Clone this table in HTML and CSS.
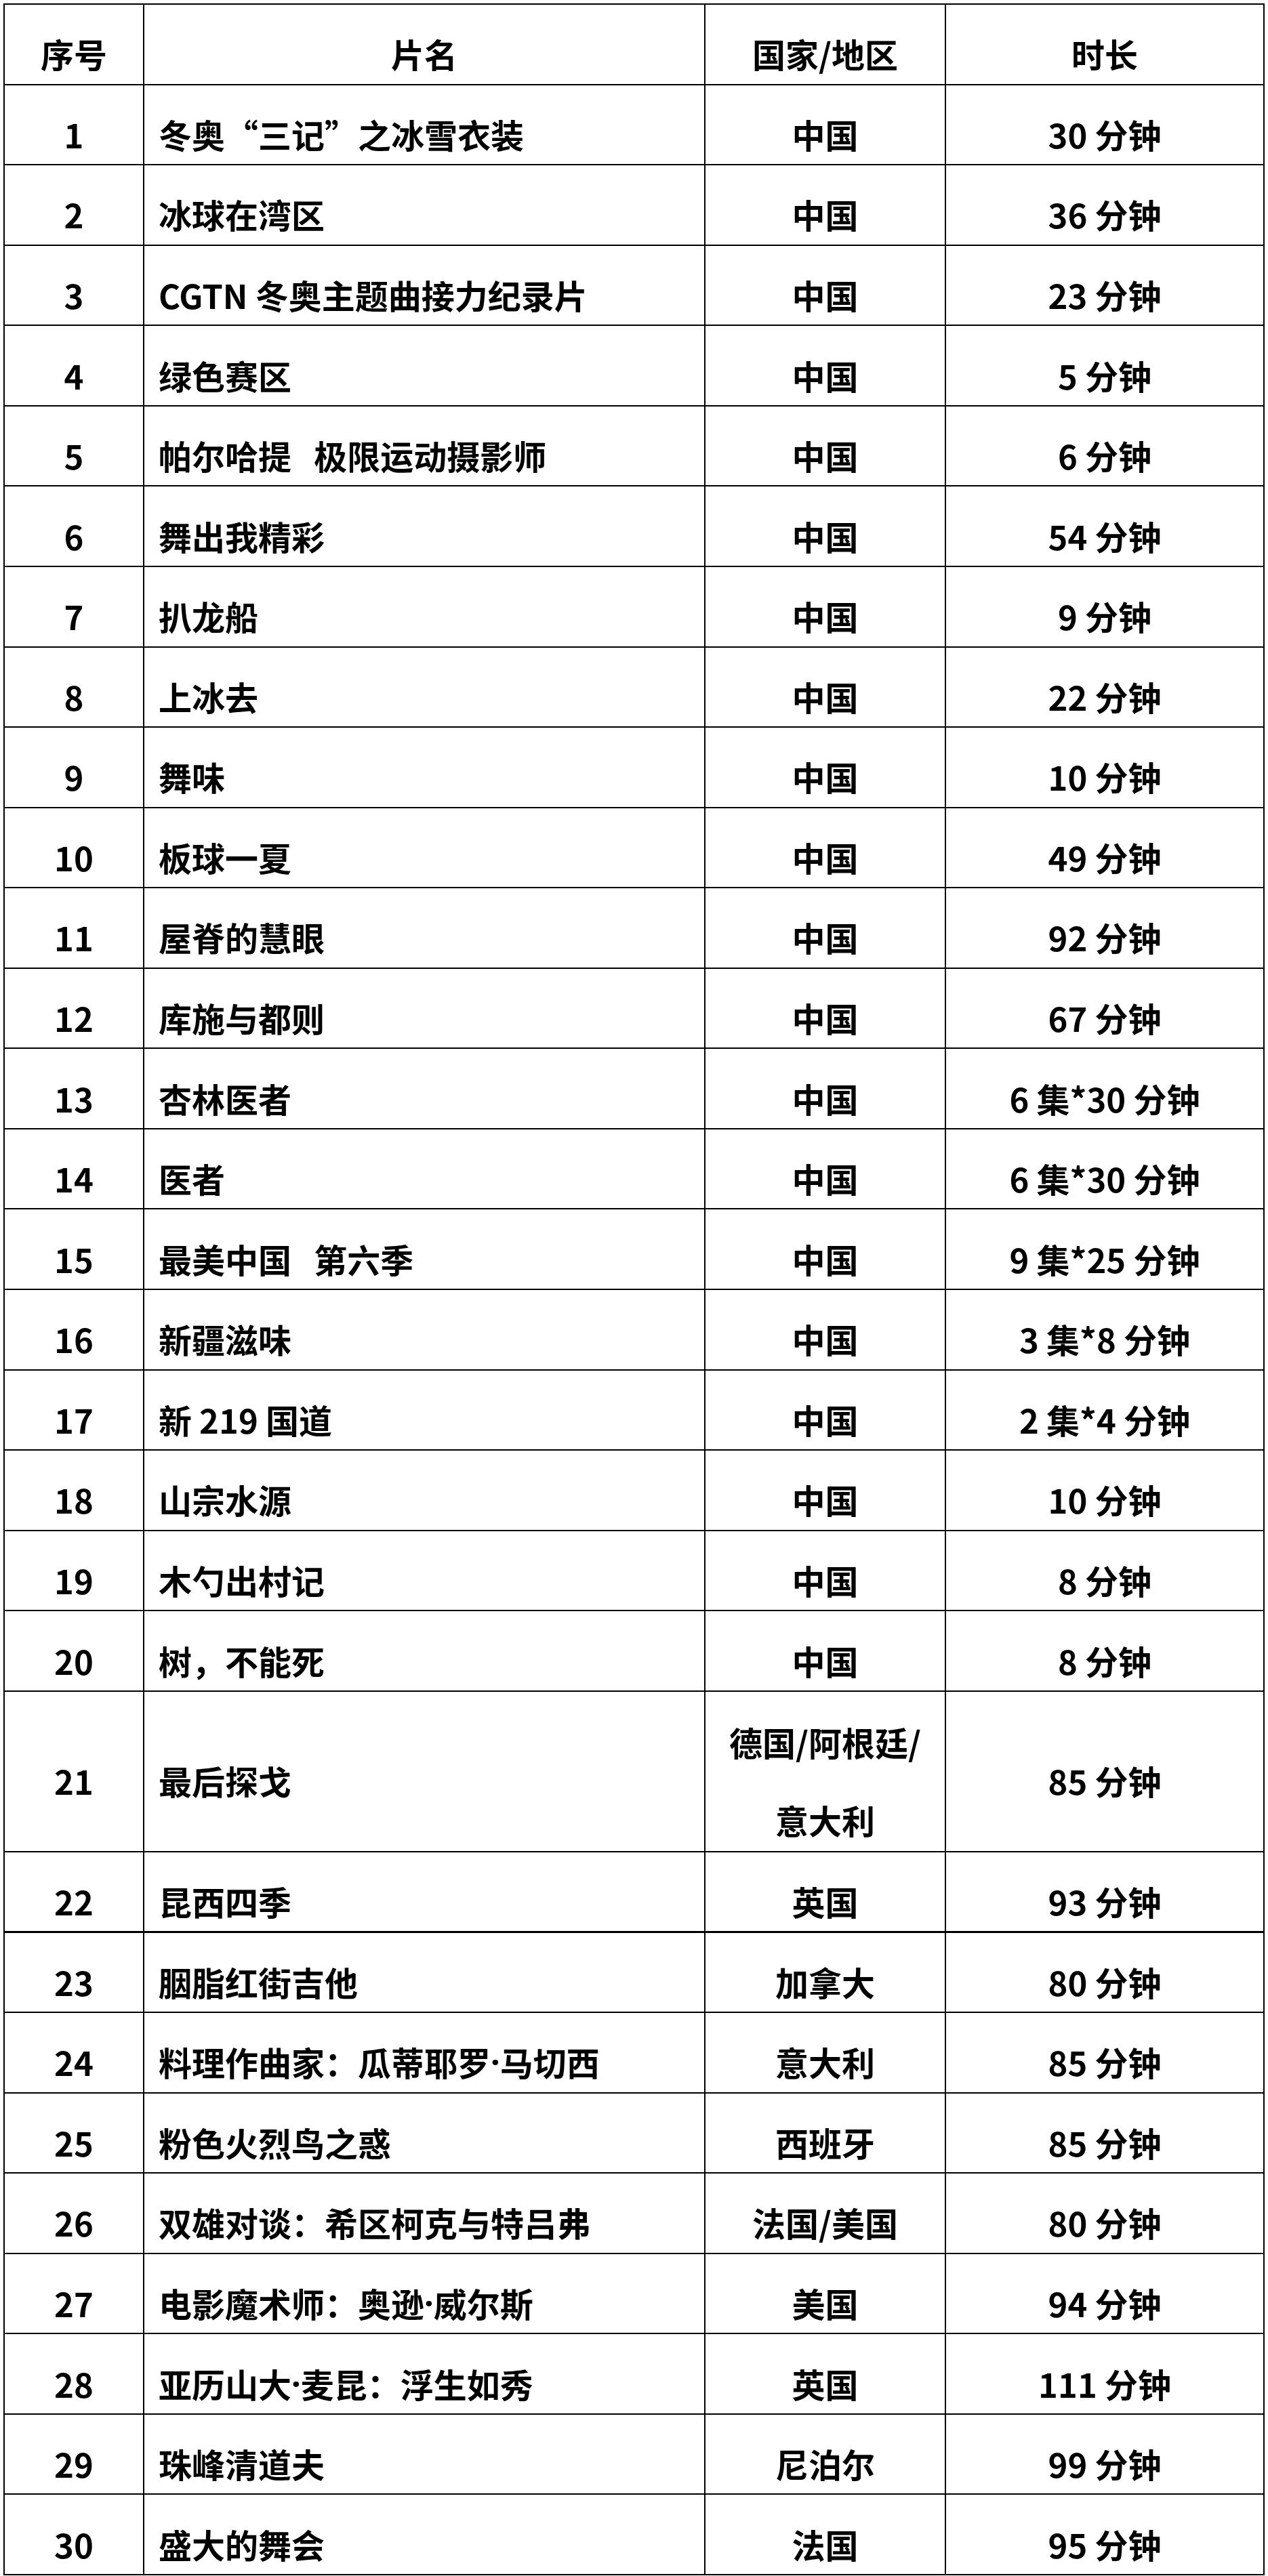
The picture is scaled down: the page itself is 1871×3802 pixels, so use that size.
FILE: index.html
```html
<!DOCTYPE html>
<html lang="zh-CN">
<head>
<meta charset="utf-8">
<title>片单</title>
<link rel="stylesheet" href="styles.css">
</head>
<body>
<div class="sheet">
  <div class="c num">序号</div><div class="c name head">片名</div><div class="c mid">国家/地区</div><div class="c mid">时长</div>

  <div class="c num">1</div><div class="c name">冬奥“三记”之冰雪衣装</div><div class="c mid">中国</div><div class="c mid">30 分钟</div>
  <div class="c num">2</div><div class="c name">冰球在湾区</div><div class="c mid">中国</div><div class="c mid">36 分钟</div>
  <div class="c num">3</div><div class="c name">CGTN 冬奥主题曲接力纪录片</div><div class="c mid">中国</div><div class="c mid">23 分钟</div>
  <div class="c num">4</div><div class="c name">绿色赛区</div><div class="c mid">中国</div><div class="c mid">5 分钟</div>
  <div class="c num">5</div><div class="c name">帕尔哈提&nbsp;&nbsp; 极限运动摄影师</div><div class="c mid">中国</div><div class="c mid">6 分钟</div>
  <div class="c num">6</div><div class="c name">舞出我精彩</div><div class="c mid">中国</div><div class="c mid">54 分钟</div>
  <div class="c num">7</div><div class="c name">扒龙船</div><div class="c mid">中国</div><div class="c mid">9 分钟</div>
  <div class="c num">8</div><div class="c name">上冰去</div><div class="c mid">中国</div><div class="c mid">22 分钟</div>
  <div class="c num">9</div><div class="c name">舞味</div><div class="c mid">中国</div><div class="c mid">10 分钟</div>
  <div class="c num">10</div><div class="c name">板球一夏</div><div class="c mid">中国</div><div class="c mid">49 分钟</div>
  <div class="c num">11</div><div class="c name">屋脊的慧眼</div><div class="c mid">中国</div><div class="c mid">92 分钟</div>
  <div class="c num">12</div><div class="c name">库施与都则</div><div class="c mid">中国</div><div class="c mid">67 分钟</div>
  <div class="c num">13</div><div class="c name">杏林医者</div><div class="c mid">中国</div><div class="c mid">6 集*30 分钟</div>
  <div class="c num">14</div><div class="c name">医者</div><div class="c mid">中国</div><div class="c mid">6 集*30 分钟</div>
  <div class="c num">15</div><div class="c name">最美中国&nbsp;&nbsp; 第六季</div><div class="c mid">中国</div><div class="c mid">9 集*25 分钟</div>
  <div class="c num">16</div><div class="c name">新疆滋味</div><div class="c mid">中国</div><div class="c mid">3 集*8 分钟</div>
  <div class="c num">17</div><div class="c name">新 219 国道</div><div class="c mid">中国</div><div class="c mid">2 集*4 分钟</div>
  <div class="c num">18</div><div class="c name">山宗水源</div><div class="c mid">中国</div><div class="c mid">10 分钟</div>
  <div class="c num">19</div><div class="c name">木勺出村记</div><div class="c mid">中国</div><div class="c mid">8 分钟</div>
  <div class="c num">20</div><div class="c name">树，不能死</div><div class="c mid">中国</div><div class="c mid">8 分钟</div>
  <div class="c num tall">21</div><div class="c name tall">最后探戈</div><div class="c mid tall">德国/阿根廷/<br>意大利</div><div class="c mid tall">85 分钟</div>
  <div class="c num thick">22</div><div class="c name thick">昆西四季</div><div class="c mid thick">英国</div><div class="c mid thick">93 分钟</div>
  <div class="c num">23</div><div class="c name">胭脂红街吉他</div><div class="c mid">加拿大</div><div class="c mid">80 分钟</div>
  <div class="c num">24</div><div class="c name">料理作曲家：瓜蒂耶罗<span class="dot">·</span>马切西</div><div class="c mid">意大利</div><div class="c mid">85 分钟</div>
  <div class="c num">25</div><div class="c name">粉色火烈鸟之惑</div><div class="c mid">西班牙</div><div class="c mid">85 分钟</div>
  <div class="c num">26</div><div class="c name">双雄对谈：希区柯克与特吕弗</div><div class="c mid">法国/美国</div><div class="c mid">80 分钟</div>
  <div class="c num">27</div><div class="c name">电影魔术师：奥逊<span class="dot">·</span>威尔斯</div><div class="c mid">美国</div><div class="c mid">94 分钟</div>
  <div class="c num">28</div><div class="c name">亚历山大<span class="dot">·</span>麦昆：浮生如秀</div><div class="c mid">英国</div><div class="c mid">111 分钟</div>
  <div class="c num">29</div><div class="c name">珠峰清道夫</div><div class="c mid">尼泊尔</div><div class="c mid">99 分钟</div>
  <div class="c num">30</div><div class="c name">盛大的舞会</div><div class="c mid">法国</div><div class="c mid">95 分钟</div>
</div>
</body>
</html>
```

FILE: styles.css
```css
html, body {
  margin: 0;
  padding: 0;
  background: #fff;
}

body {
  font-family: "Noto Sans CJK SC", "Noto Sans", sans-serif;
  color: #000;
}

.sheet {
  display: grid;
  grid-template-columns: 206px 828px 355px 470px;
  grid-auto-rows: 118.5625px;
  width: max-content;
  margin: 5px 0 0 5px;
  border-top: 2px solid #000;
  border-left: 2px solid #000;
}

.c {
  box-sizing: border-box;
  display: flex;
  align-items: center;
  justify-content: center;
  text-align: center;
  padding-top: 27px;
  border-right: 2px solid #000;
  border-bottom: 2px solid #000;
  font-size: 49px;
  font-weight: 700;
  line-height: 115px;
  white-space: nowrap;
}

.name {
  justify-content: flex-start;
  text-align: left;
  padding-left: 21px;
}

.name.head {
  justify-content: center;
  padding-left: 0;
}

.dot {
  font-family: "Noto Sans", "Liberation Sans", sans-serif;
  font-weight: 700;
}

.tall {
  grid-row: span 2;
}

.thick {
  border-bottom-width: 3px;
}
```
